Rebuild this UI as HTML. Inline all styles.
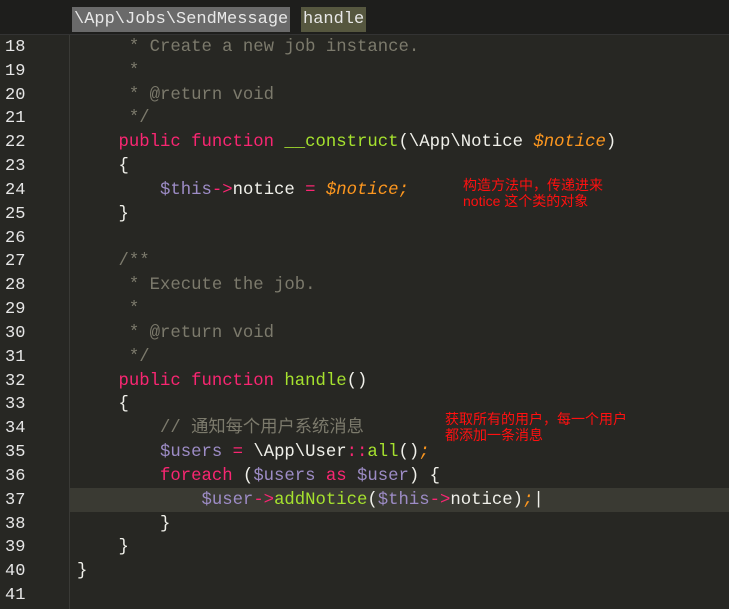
<!DOCTYPE html><html><head><meta charset="utf-8"><style>
body{margin:0;width:729px;height:609px;background:#272723;overflow:hidden;position:relative;font-family:"Liberation Mono",monospace}
.top{position:absolute;left:0;top:0;width:729px;height:34px;background:#1e1e1c;border-bottom:1px solid #333}
.bc{position:absolute;top:7px;height:25px;line-height:25px;font-size:17px;color:#e8e8e8;padding:0 2px}
.gut{position:absolute;left:69px;top:35px;width:1px;height:574px;background:#3a3a36}
.ln{position:absolute;left:5px;font-size:17px;color:#e6e6e6;width:40px;line-height:20px}
.code{position:absolute;left:77px;font-size:17.3px;color:#f0f0ea;white-space:pre;line-height:20px;font-family:"Liberation Mono","Noto Sans CJK SC",monospace}
.c{color:#7c7a6c}.k{color:#f92672}.f{color:#a6e22e}.v{color:#9d8cc6}.o{color:#fd971f;font-style:italic}.p{color:#f92672}
.hl{position:absolute;left:70px;top:488px;width:659px;height:24px;background:#3a3a33}
.ann{position:absolute;color:#ff1010;font-family:"Liberation Sans","Noto Sans CJK SC",sans-serif;font-size:14px;line-height:16px}
</style></head><body>
<div class="top"></div>
<div class="bc" style="left:72px;background:#6a6a6a">\App\Jobs\SendMessage</div>
<div class="bc" style="left:301px;background:#56573f">handle</div>
<div class="hl"></div>
<div class="gut"></div>
<div id="l"></div>
<div class="ann" style="left:463px;top:177px">构造方法中，传递进来<br>notice 这个类的对象</div>
<div class="ann" style="left:445px;top:411px">获取所有的用户，每一个用户<br>都添加一条消息</div>
<script>
var L=[
'<span class="c">     * Create a new job instance.</span>',
'<span class="c">     *</span>',
'<span class="c">     * @return void</span>',
'<span class="c">     */</span>',
'    <span class="k">public function</span> <span class="f">__construct</span>(\\App\\Notice <span class="o">$notice</span>)',
'    {',
'        <span class="v">$this</span><span class="p">-&gt;</span>notice <span class="p">=</span> <span class="o">$notice</span><span class="o">;</span>',
'    }',
'',
'<span class="c">    /**</span>',
'<span class="c">     * Execute the job.</span>',
'<span class="c">     *</span>',
'<span class="c">     * @return void</span>',
'<span class="c">     */</span>',
'    <span class="k">public function</span> <span class="f">handle</span>()',
'    {',
'<span class="c">        // 通知每个用户系统消息</span>',
'        <span class="v">$users</span> <span class="p">=</span> \\App\\User<span class="p">::</span><span class="f">all</span>()<span class="o">;</span>',
'        <span class="k">foreach</span> (<span class="v">$users</span> <span class="k">as</span> <span class="v">$user</span>) {',
'            <span class="v">$user</span><span class="p">-&gt;</span><span class="f">addNotice</span>(<span class="v">$this</span><span class="p">-&gt;</span>notice)<span class="o">;</span>|',
'        }',
'    }',
'}',
''];
var h='';for(var i=0;i<L.length;i++){var y=38+i*23.83;h+='<div class="ln" style="top:'+y+'px">'+(18+i)+'</div><div class="code" style="top:'+(y)+'px">'+L[i]+'</div>';}
document.getElementById('l').innerHTML=h;
</script>
</body></html>
